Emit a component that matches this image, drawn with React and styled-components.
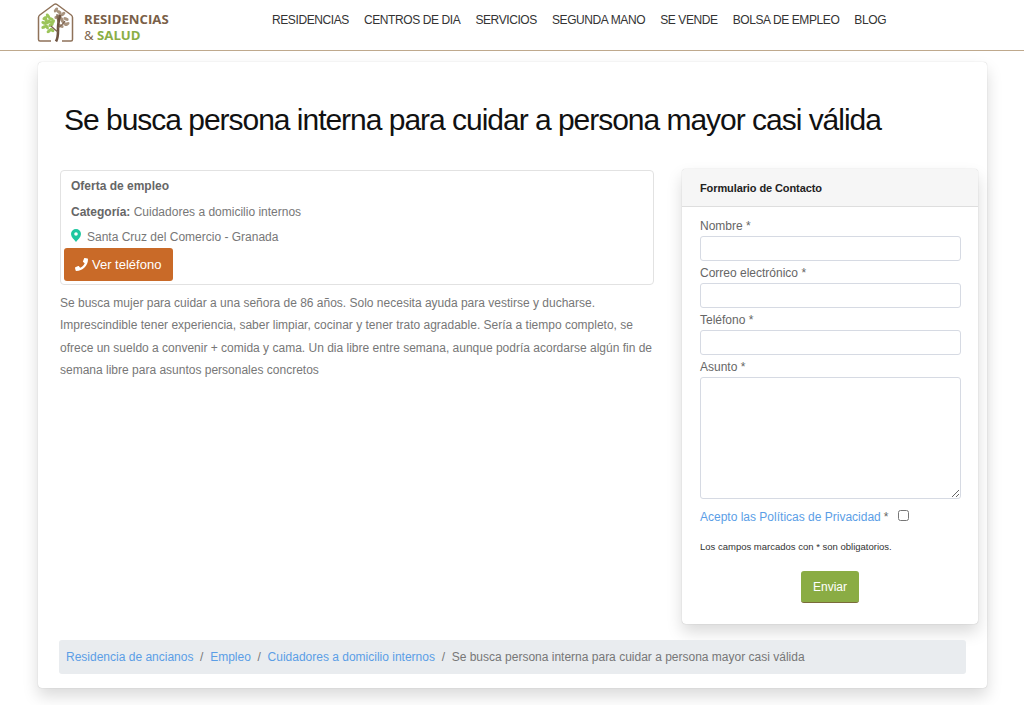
import React from 'react';
import styled, { createGlobalStyle } from 'styled-components';

const GlobalStyle = createGlobalStyle`
    * {
        box-sizing: border-box;
    }

    html, body {
        margin: 0;
        padding: 0;
        background: #fff;
        font-family: "Liberation Sans", Arial, sans-serif;
        font-size: 12px;
        color: #777;
    }
`;

const Page = styled.div`
    width: 1024px;
    height: 705px;
    overflow: hidden;
`;

const Header = styled.header`
    height: 51px;
    display: flex;
    align-items: flex-start;
    padding-left: 37px;
    border-bottom: 1px solid #bfa98d;
`;

const Brand = styled.div`
    width: 235px;
    display: flex;
    align-items: flex-start;
    gap: 10px;
    padding-top: 3px;
`;

const BrandText = styled.div`
    padding-top: 8px;
    font-family: "Open Sans", sans-serif;
    font-weight: 700;
    font-size: 13.2px;
    line-height: 16px;
    color: #7a5f48;
`;

const BrandAmp = styled.span`
    font-weight: 400;
`;

const BrandGreen = styled.span`
    color: #8aae45;
`;

const Nav = styled.nav`
    display: flex;
    gap: 15px;
    padding-top: 13px;
`;

const NavLink = styled.a`
    font-size: 12px;
    line-height: 14px;
    letter-spacing: -0.4px;
    color: #333;
    white-space: nowrap;
`;

const Main = styled.main`
    width: 949px;
    height: 626px;
    margin: 11px 0 0 38px;
    padding: 0 21px;
    border-radius: 4px;
    background: #fff;
    box-shadow: 0 0 1px rgba(0, 0, 0, 0.25), 0 8px 16px rgba(0, 0, 0, 0.15);
    display: flex;
    flex-direction: column;
`;

const Title = styled.h1`
    margin: 0;
    padding: 39px 0 0 5px;
    height: 107px;
    font-size: 30px;
    line-height: 38px;
    font-weight: 400;
    letter-spacing: -1.02px;
    color: #111;
`;

const Columns = styled.div`
    display: flex;
    justify-content: space-between;
    height: 471px;
`;

const LeftColumn = styled.div`
    width: 595px;
    padding: 1px 0 0 1px;
`;

const OfferBox = styled.div`
    height: 115px;
    padding: 7px 3px;
    border: 1px solid #e2e2e2;
    border-radius: 4px;
`;

const OfferLine = styled.div`
    height: 25.5px;
    padding-left: 7px;
    line-height: 16px;
    display: flex;
    align-items: flex-start;
    gap: 6px;
`;

const Strong = styled.strong`
    font-weight: 700;
    color: #666;
`;

const PhoneButton = styled.button`
    display: flex;
    align-items: center;
    gap: 4px;
    width: 109px;
    height: 33px;
    margin-top: -7px;
    padding: 0 0 0 11px;
    border: none;
    border-radius: 3px;
    background: #c96a28;
    color: #fff;
    font-family: inherit;
    font-size: 13px;
`;

const Description = styled.p`
    margin: 7px 0 0;
    line-height: 22.3px;
`;

const FormCard = styled.aside`
    width: 296px;
    height: 455px;
    margin-right: -12px;
    border-radius: 4px;
    background: #fff;
    box-shadow: 0 0 1px rgba(0, 0, 0, 0.3), 0 8px 16px rgba(0, 0, 0, 0.15);
`;

const FormHeader = styled.div`
    height: 38px;
    padding-left: 18px;
    display: flex;
    align-items: center;
    background: #f6f6f6;
    border-bottom: 1px solid #dedede;
    border-radius: 4px 4px 0 0;
    font-size: 11px;
    font-weight: 700;
    letter-spacing: -0.1px;
    color: #222;
`;

const Form = styled.form`
    display: flex;
    flex-direction: column;
    padding: 10px 18px 0;
`;

const Label = styled.label`
    display: block;
    height: 19px;
    line-height: 18px;
    color: #666;
`;

const Input = styled.input`
    width: 261px;
    height: 25px;
    margin-bottom: 3px;
    border: 1px solid #d6dae3;
    border-radius: 3px;
    background: #fff;
`;

const TextArea = styled.textarea`
    display: block;
    width: 261px;
    height: 122px;
    border: 1px solid #d6dae3;
    border-radius: 3px;
    background: #fff;
`;

const PrivacyRow = styled.div`
    display: flex;
    align-items: center;
    height: 18px;
    margin-top: 9px;
    color: #666;
`;

const PrivacyLink = styled.a`
    color: #5b9ee6;
    margin-right: 3px;
`;

const CheckBox = styled.input`
    width: 11px;
    height: 11px;
    margin: 0 0 3px 10px;
`;

const Note = styled.p`
    margin: 15px 0 0;
    font-size: 9.5px;
    line-height: 12px;
    color: #333;
`;

const SubmitButton = styled.button`
    width: 58px;
    height: 32px;
    margin: 18px auto 0;
    border: none;
    border-bottom: 1px solid #7a6a3a;
    border-radius: 3px;
    background: #8aac44;
    color: #fff;
    font-family: inherit;
    font-size: 12px;
`;

const Breadcrumb = styled.nav`
    width: 907px;
    height: 34px;
    padding-left: 7px;
    display: flex;
    align-items: center;
    background: #e9ecef;
    border-radius: 3px;
`;

const Crumb = styled.a`
    color: #5b9ee6;
`;

const CrumbSep = styled.span`
    padding: 0 6.7px;
`;

const leaves = [
    [8, 15, -30], [11, 13, 50], [7, 20, 20], [11, 19, -50], [14, 16, 20],
    [10, 24, 60], [14, 22, -20], [15, 27, 40], [12, 28, -40], [9, 17, 80],
    [13, 19, 10], [7, 24, -20], [16, 19, -60],
];

const brownLeaves = [
    [22, 9, 30], [26, 11, -40], [20, 14, -20], [29, 16, 20], [25, 17, 70],
    [30, 21, -30], [24, 23, 20], [19, 7, -50], [27, 20, 50], [23, 13, 80],
];

const Logo = () => (
    <svg width="37" height="39" viewBox="0 0 37 39" fill="none">
        <path
            d="M14 38 H3 Q1.500 38 1.500 36.500 V14.500 Q1.500 13 2.800 12 L17 1.500 Q18.500 .5 20 1.500 L34.200 12 Q35.500 13 35.500 14.500 V36.500 Q35.500 38 34 38 H25"
            stroke="#8f7259"
            strokeWidth="1.500"
        />
        {leaves.map(([x, y, r]) => (
            <ellipse key={`${x}-${y}`} cx={x} cy={y} rx="2.800" ry="1.600" fill="#9cc45a" transform={`rotate(${r} ${x} ${y})`} />
        ))}
        {brownLeaves.map(([x, y, r]) => (
            <ellipse key={`${x}-${y}`} cx={x} cy={y} rx="2.800" ry="1.600" fill="#a8937e" transform={`rotate(${r} ${x} ${y})`} />
        ))}
        <path d="M19 38.500 C21.500 34 21 29 21 25 C21 21 22 17 23 12" stroke="#6e5442" strokeWidth="2.600" />
        <path d="M21 29 C18 27 16 25 14 23 M21 25 C24 23 26 21 28 18 M21.500 20 C20 17 20 14 20 11" stroke="#7d6350" strokeWidth="1.200" />
    </svg>
);

const PinIcon = () => (
    <svg width="10" height="13" viewBox="0 0 10 13">
        <path fillRule="evenodd" fill="#1fc7a0" d="M5 0a5 5 0 0 1 5 5c0 3-3 5.500-5 8C3 10.500 0 8 0 5a5 5 0 0 1 5-5Zm0 3.200a1.800 1.800 0 1 0 0 3.600 1.800 1.800 0 0 0 0-3.600Z" />
    </svg>
);

const PhoneIcon = () => (
    <svg width="13" height="13" viewBox="0 0 512 512">
        <path fill="#fff" d="M493.400 24.600l-104-24c-11.300-2.600-22.900 3.300-27.500 13.900l-48 112c-4.200 9.800-1.400 21.300 6.900 28l60.600 49.600c-36 76.700-98.900 140.500-177.200 177.200l-49.600-60.600c-6.800-8.300-18.200-11.100-28-6.900l-112 48C3.900 366.500-2 378.100.6 389.400l24 104C27.100 504.200 36.700 512 48 512c256.100 0 464-207.500 464-464 0-11.200-7.700-20.900-18.600-23.400z" />
    </svg>
);

const navItems = ['RESIDENCIAS', 'CENTROS DE DIA', 'SERVICIOS', 'SEGUNDA MANO', 'SE VENDE', 'BOLSA DE EMPLEO', 'BLOG'];

const App = () => {
    return (
        <Page>
            <GlobalStyle />
            <Header>
                <Brand>
                    <Logo />
                    <BrandText>
                        RESIDENCIAS
                        <br />
                        <BrandAmp>&amp;</BrandAmp> <BrandGreen>SALUD</BrandGreen>
                    </BrandText>
                </Brand>
                <Nav>
                    {navItems.map((item) => (
                        <NavLink key={item}>{item}</NavLink>
                    ))}
                </Nav>
            </Header>
            <Main>
                <Title>Se busca persona interna para cuidar a persona mayor casi válida</Title>
                <Columns>
                    <LeftColumn>
                        <OfferBox>
                            <OfferLine>
                                <Strong>Oferta de empleo</Strong>
                            </OfferLine>
                            <OfferLine>
                                <span>
                                    <Strong>Categoría:</Strong> Cuidadores a domicilio internos
                                </span>
                            </OfferLine>
                            <OfferLine>
                                <PinIcon />
                                <span>Santa Cruz del Comercio - Granada</span>
                            </OfferLine>
                            <PhoneButton>
                                <PhoneIcon />
                                Ver teléfono
                            </PhoneButton>
                        </OfferBox>
                        <Description>
                            Se busca mujer para cuidar a una señora de 86 años. Solo necesita ayuda para vestirse y ducharse. Imprescindible tener experiencia, saber limpiar, cocinar y tener trato agradable. Sería a tiempo completo, se ofrece un sueldo a convenir + comida y cama. Un dia libre entre semana, aunque podría acordarse algún fin de semana libre para asuntos personales concretos
                        </Description>
                    </LeftColumn>
                    <FormCard>
                        <FormHeader>Formulario de Contacto</FormHeader>
                        <Form>
                            <Label>Nombre *</Label>
                            <Input />
                            <Label>Correo electrónico *</Label>
                            <Input />
                            <Label>Teléfono *</Label>
                            <Input />
                            <Label>Asunto *</Label>
                            <TextArea />
                            <PrivacyRow>
                                <PrivacyLink>Acepto las Políticas de Privacidad</PrivacyLink> *
                                <CheckBox type="checkbox" />
                            </PrivacyRow>
                            <Note>Los campos marcados con * son obligatorios.</Note>
                            <SubmitButton type="button">Enviar</SubmitButton>
                        </Form>
                    </FormCard>
                </Columns>
                <Breadcrumb>
                    <Crumb>Residencia de ancianos</Crumb>
                    <CrumbSep>/</CrumbSep>
                    <Crumb>Empleo</Crumb>
                    <CrumbSep>/</CrumbSep>
                    <Crumb>Cuidadores a domicilio internos</Crumb>
                    <CrumbSep>/</CrumbSep>
                    <span>Se busca persona interna para cuidar a persona mayor casi válida</span>
                </Breadcrumb>
            </Main>
        </Page>
    );
};

export default App;
